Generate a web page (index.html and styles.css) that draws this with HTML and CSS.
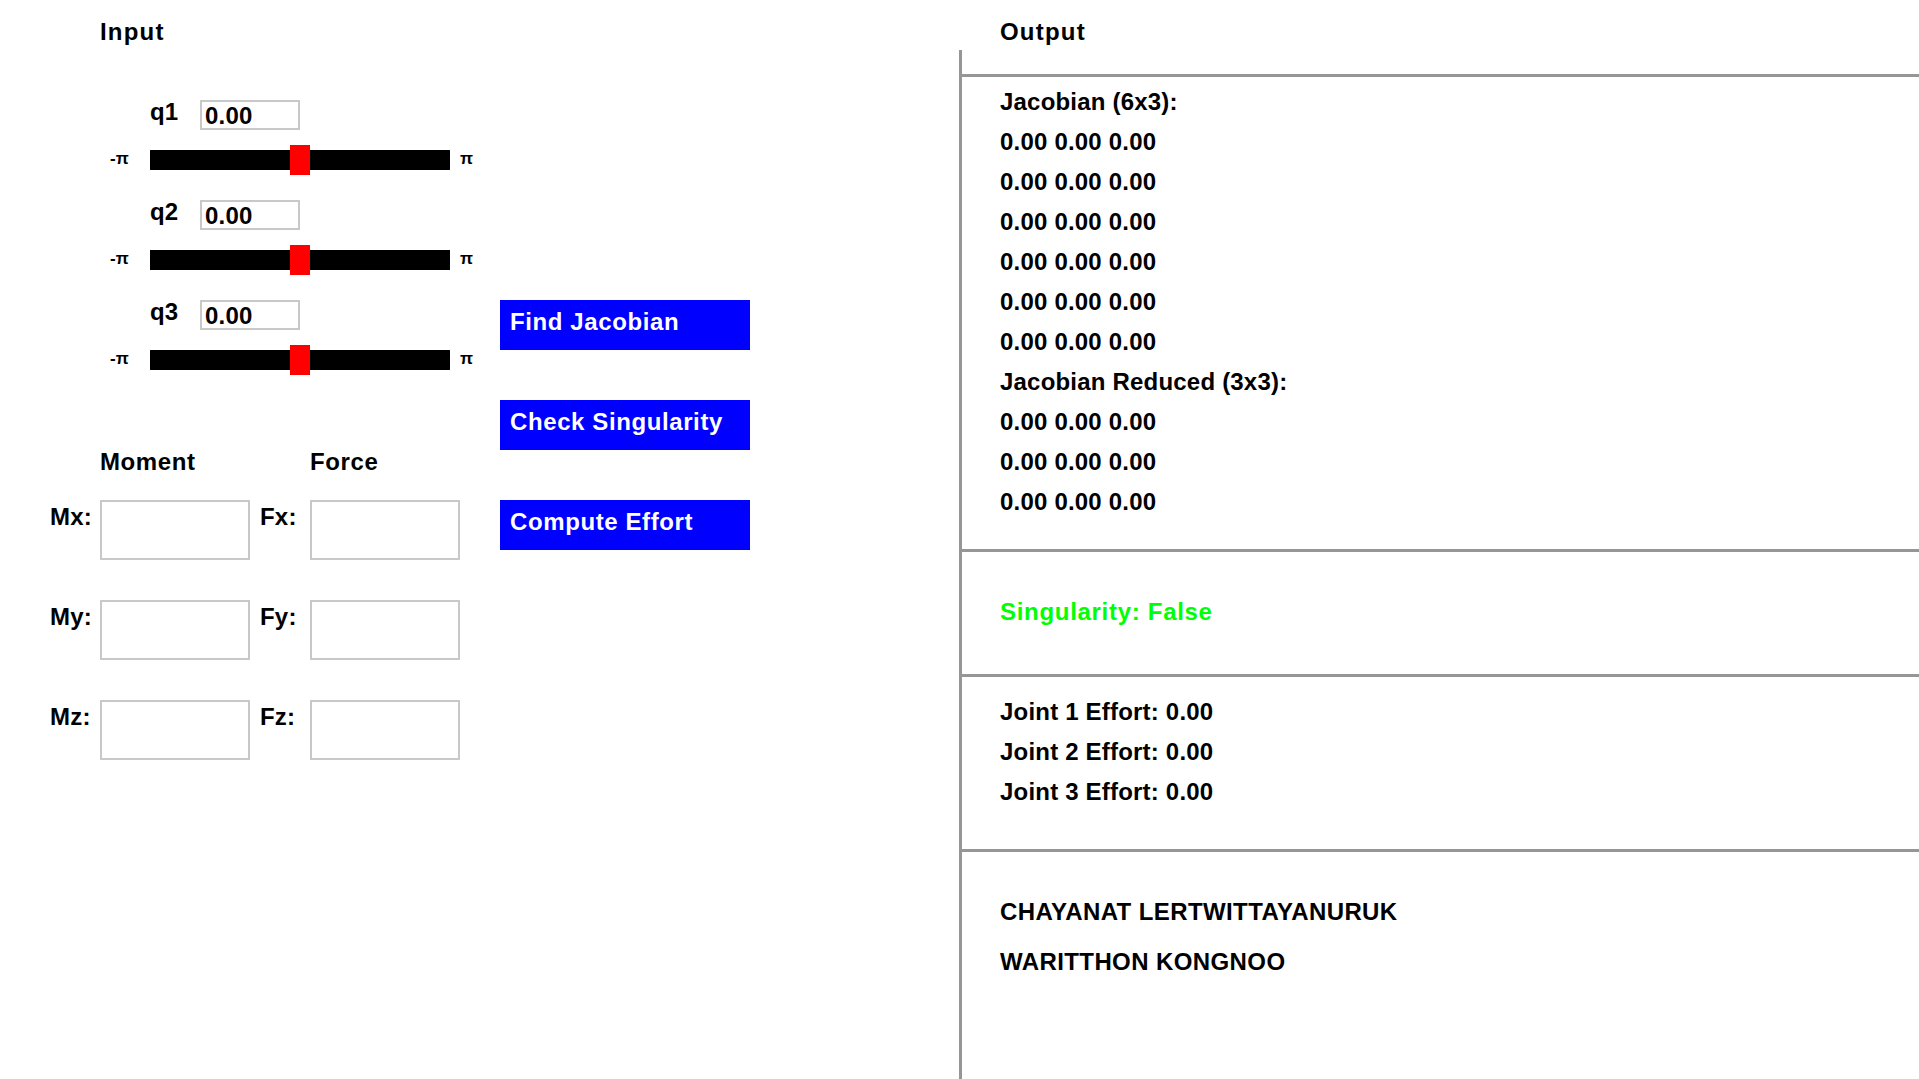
FILE: index.html
```html
<!DOCTYPE html>
<html lang="en">
<head>
<meta charset="utf-8">
<title>Jacobian Tool</title>
<link rel="stylesheet" href="styles.css">
</head>
<body>
<div class="app">
  <section class="input-panel">
    <div class="panel-title">Input</div>
    <div class="input-body">
      <div class="controls">
        <div class="joint">
          <div class="joint-head"><span class="joint-name">q1</span><div class="value-box">0.00</div></div>
          <div class="slider-row"><span class="limit">-π</span><div class="track"><div class="thumb"></div></div><span class="limit limit-max">π</span></div>
        </div>
        <div class="joint">
          <div class="joint-head"><span class="joint-name">q2</span><div class="value-box">0.00</div></div>
          <div class="slider-row"><span class="limit">-π</span><div class="track"><div class="thumb"></div></div><span class="limit limit-max">π</span></div>
        </div>
        <div class="joint">
          <div class="joint-head"><span class="joint-name">q3</span><div class="value-box">0.00</div></div>
          <div class="slider-row"><span class="limit">-π</span><div class="track"><div class="thumb"></div></div><span class="limit limit-max">π</span></div>
        </div>
        <div class="wrench">
          <div class="wrench-head"><span class="wh-moment">Moment</span><span>Force</span></div>
          <div class="wrench-rows">
            <div class="wrench-row"><span class="axis">Mx:</span><div class="field"></div><span class="axis axis-f">Fx:</span><div class="field"></div></div>
            <div class="wrench-row"><span class="axis">My:</span><div class="field"></div><span class="axis axis-f">Fy:</span><div class="field"></div></div>
            <div class="wrench-row"><span class="axis">Mz:</span><div class="field"></div><span class="axis axis-f">Fz:</span><div class="field"></div></div>
          </div>
        </div>
      </div>
      <div class="actions">
        <button class="btn">Find Jacobian</button>
        <button class="btn">Check Singularity</button>
        <button class="btn">Compute Effort</button>
      </div>
    </div>
  </section>
  <section class="output-panel">
    <div class="panel-title">Output</div>
    <div class="output-body">
      <div class="section sec-jacobian">
        <div class="line">Jacobian (6x3):</div>
        <div class="line">0.00 0.00 0.00</div>
        <div class="line">0.00 0.00 0.00</div>
        <div class="line">0.00 0.00 0.00</div>
        <div class="line">0.00 0.00 0.00</div>
        <div class="line">0.00 0.00 0.00</div>
        <div class="line">0.00 0.00 0.00</div>
        <div class="line">Jacobian Reduced (3x3):</div>
        <div class="line">0.00 0.00 0.00</div>
        <div class="line">0.00 0.00 0.00</div>
        <div class="line">0.00 0.00 0.00</div>
      </div>
      <div class="section sec-singular">
        <div class="line ok">Singularity: False</div>
      </div>
      <div class="section sec-effort">
        <div class="line">Joint 1 Effort: 0.00</div>
        <div class="line">Joint 2 Effort: 0.00</div>
        <div class="line">Joint 3 Effort: 0.00</div>
      </div>
      <div class="section sec-credits">
        <div class="name">CHAYANAT LERTWITTAYANURUK</div>
        <div class="name">WARITTHON KONGNOO</div>
      </div>
    </div>
  </section>
</div>
</body>
</html>
```
FILE: styles.css
```css
* {
  box-sizing: border-box;
  margin: 0;
  padding: 0;
}

html, body {
  background: #ffffff;
}

body {
  width: 1919px;
  height: 1079px;
  overflow: hidden;
  font-family: "Liberation Sans", Arial, sans-serif;
  font-weight: 700;
  font-size: 24px;
  color: #000000;
  letter-spacing: 0.2px;
}

.app {
  display: grid;
  grid-template-columns: 959px 1fr;
  height: 1079px;
}

.panel-title {
  height: 50px;
  padding-top: 12px;
  line-height: 40px;
  letter-spacing: 1.2px;
}

.input-panel .panel-title {
  padding-left: 100px;
}

.output-panel .panel-title {
  padding-left: 41px;
}

/* ---------- input side ---------- */

.input-body {
  display: flex;
  padding-top: 50px;
}

.controls {
  width: 500px;
}

.joint {
  height: 100px;
}

.joint-head {
  display: flex;
  align-items: flex-start;
  height: 30px;
  padding-left: 150px;
}

.joint-name {
  width: 50px;
  line-height: 24px;
}

.value-box {
  width: 100px;
  height: 30px;
  border: 2px solid #c8c8c8;
  padding-left: 3px;
  line-height: 27px;
}

.slider-row {
  display: flex;
  align-items: center;
  height: 30px;
  margin-top: 15px;
  padding-left: 110px;
}

.limit {
  width: 40px;
  font-size: 17px;
  line-height: 20px;
  padding-bottom: 3px;
  letter-spacing: 0;
}

.limit-max {
  width: auto;
  margin-left: 10px;
}

.track {
  position: relative;
  width: 300px;
  height: 20px;
  background: #000000;
}

.thumb {
  position: absolute;
  left: 140px;
  top: -5px;
  width: 20px;
  height: 30px;
  background: #ff0000;
}

.wrench {
  margin-top: 50px;
}

.wrench-head {
  display: flex;
  height: 24px;
  line-height: 24px;
  letter-spacing: 0.6px;
}

.wh-moment {
  margin-left: 100px;
  width: 210px;
}

.wrench-rows {
  display: flex;
  flex-direction: column;
  gap: 40px;
  margin-top: 26px;
}

.wrench-row {
  display: flex;
  align-items: flex-start;
  padding-left: 50px;
}

.axis {
  width: 50px;
  line-height: 34px;
}

.axis-f {
  margin-left: 10px;
}

.field {
  width: 150px;
  height: 60px;
  border: 2px solid #c8c8c8;
}

.actions {
  display: flex;
  flex-direction: column;
  align-items: flex-start;
  gap: 50px;
  margin-top: 200px;
}

.btn {
  width: 250px;
  height: 50px;
  border: none;
  background: #0000ff;
  color: #ffffff;
  font: inherit;
  letter-spacing: 0.6px;
  text-align: left;
  padding: 0 0 6px 10px;
  line-height: 44px;
  display: block;
}

/* ---------- output side ---------- */

.output-body {
  display: flex;
  flex-direction: column;
  height: 1029px;
  border-left: 3px solid #969696;
  padding-top: 24px;
}

.section {
  border-top: 3px solid #969696;
  padding-left: 38px;
}

.line {
  line-height: 40px;
}

.sec-jacobian {
  height: 475px;
  padding-top: 5px;
}

.sec-singular {
  height: 125px;
  padding-top: 40px;
}

.ok {
  color: #00ff00;
  letter-spacing: 0.7px;
}

.sec-effort {
  height: 175px;
  padding-top: 15px;
}

.sec-credits {
  flex: 1;
  padding-top: 35px;
}

.name {
  font-size: 24px;
  line-height: 50px;
  letter-spacing: 0.4px;
}
```
